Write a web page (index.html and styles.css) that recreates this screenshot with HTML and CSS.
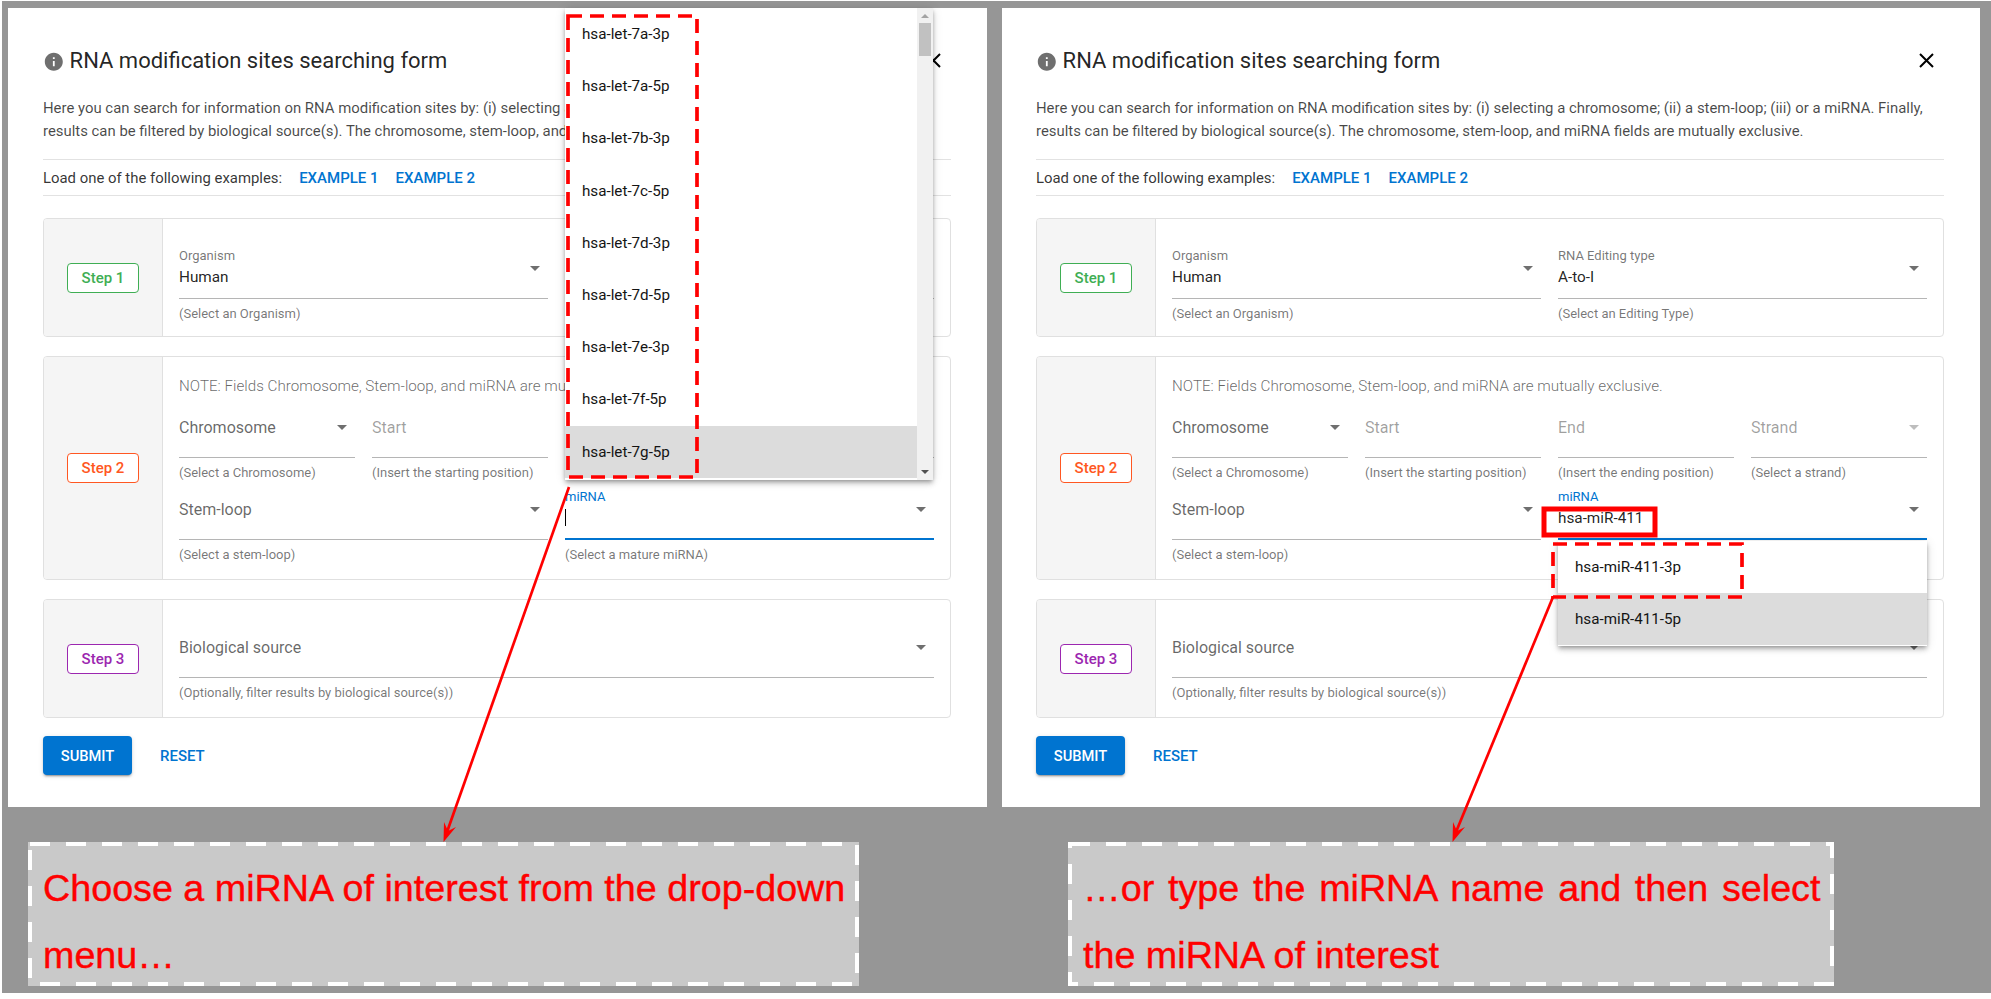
FILE: index.html
```html
<!DOCTYPE html>
<html lang="en">
<head>
<meta charset="utf-8">
<title>RNA modification sites searching form</title>
<link rel="stylesheet" href="styles.css">
</head>
<body>
<div class="stage">
  <section class="col">
    <div class="panel">
      <div class="title-row">
        <svg class="info" viewBox="0 0 24 24"><path d="M12 2C6.48 2 2 6.48 2 12s4.48 10 10 10 10-4.48 10-10S17.52 2 12 2zm1 15h-2v-6h2v6zm0-8h-2V7h2v2z"/></svg>
        <h2 class="title">RNA modification sites searching form</h2>
        <svg class="close" viewBox="0 0 15 15"><path d="M1 1l13 13M14 1L1 14"/></svg>
      </div>
      <p class="intro">Here you can search for information on RNA modification sites by: (i) selecting a chromosome; (ii) a stem-loop; (iii) or a miRNA. Finally, results can be filtered by biological source(s). The chromosome, stem-loop, and miRNA fields are mutually exclusive.</p>
      <div class="examples"><span>Load one of the following examples:</span><a class="link">EXAMPLE 1</a><a class="link">EXAMPLE 2</a></div>

      <div class="card card-1">
        <div class="step"><span class="badge green">Step 1</span></div>
        <div class="fields">
          <div class="field wide"><div class="control"><div class="label">Organism</div><div class="value">Human</div><i class="caret"></i></div><div class="help">(Select an Organism)</div></div>
          <div class="field wide"><div class="control"><div class="label">RNA Editing type</div><div class="value">A-to-I</div><i class="caret"></i></div><div class="help">(Select an Editing Type)</div></div>
        </div>
      </div>

      <div class="card card-2">
        <div class="step"><span class="badge orange">Step 2</span></div>
        <div class="body">
          <p class="note">NOTE: Fields Chromosome, Stem-loop, and miRNA are mutually exclusive.</p>
          <div class="fields">
            <div class="field"><div class="control"><div class="ph">Chromosome</div><i class="caret"></i></div><div class="help">(Select a Chromosome)</div></div>
            <div class="field"><div class="control"><div class="ph dim">Start</div></div><div class="help">(Insert the starting position)</div></div>
            <div class="field"><div class="control"><div class="ph dim">End</div></div><div class="help">(Insert the ending position)</div></div>
            <div class="field"><div class="control"><div class="ph dim">Strand</div><i class="caret faint"></i></div><div class="help">(Select a strand)</div></div>
            <div class="field wide"><div class="control"><div class="ph">Stem-loop</div><i class="caret"></i></div><div class="help">(Select a stem-loop)</div></div>
            <div class="field wide"><div class="control focus"><div class="label blue">miRNA</div><div class="value"><span class="cursor"></span></div><i class="caret"></i></div><div class="help">(Select a mature miRNA)</div></div>
          </div>
        </div>
      </div>

      <div class="card card-3">
        <div class="step"><span class="badge purple">Step 3</span></div>
        <div class="fields">
          <div class="field full"><div class="control"><div class="ph">Biological source</div><i class="caret"></i></div><div class="help">(Optionally, filter results by biological source(s))</div></div>
        </div>
      </div>

      <div class="actions"><button class="submit">SUBMIT</button><a class="link reset">RESET</a></div>

      <div class="menu menu-long">
        <ul class="items">
          <li>hsa-let-7a-3p</li><li>hsa-let-7a-5p</li><li>hsa-let-7b-3p</li><li>hsa-let-7c-5p</li><li>hsa-let-7d-3p</li><li>hsa-let-7d-5p</li><li>hsa-let-7e-3p</li><li>hsa-let-7f-5p</li><li class="hl">hsa-let-7g-5p</li>
        </ul>
        <div class="scrollbar"><i class="sb-up"></i><i class="sb-thumb"></i><i class="sb-down"></i></div>
      </div>
    </div>
    <div class="caption caption-a">
      <svg class="dash" width="831" height="144"><rect x="2" y="2" width="827" height="140"/></svg>
      <p class="line">Choose a miRNA of interest from the drop-down</p>
      <p class="line">menu…</p>
    </div>
  </section>

  <section class="col col-b">
    <div class="panel panel-b">
      <div class="title-row">
        <svg class="info" viewBox="0 0 24 24"><path d="M12 2C6.48 2 2 6.48 2 12s4.48 10 10 10 10-4.48 10-10S17.52 2 12 2zm1 15h-2v-6h2v6zm0-8h-2V7h2v2z"/></svg>
        <h2 class="title">RNA modification sites searching form</h2>
        <svg class="close" viewBox="0 0 15 15"><path d="M1 1l13 13M14 1L1 14"/></svg>
      </div>
      <p class="intro">Here you can search for information on RNA modification sites by: (i) selecting a chromosome; (ii) a stem-loop; (iii) or a miRNA. Finally, results can be filtered by biological source(s). The chromosome, stem-loop, and miRNA fields are mutually exclusive.</p>
      <div class="examples"><span>Load one of the following examples:</span><a class="link">EXAMPLE 1</a><a class="link">EXAMPLE 2</a></div>

      <div class="card card-1">
        <div class="step"><span class="badge green">Step 1</span></div>
        <div class="fields">
          <div class="field wide"><div class="control"><div class="label">Organism</div><div class="value">Human</div><i class="caret"></i></div><div class="help">(Select an Organism)</div></div>
          <div class="field wide"><div class="control"><div class="label">RNA Editing type</div><div class="value">A-to-I</div><i class="caret"></i></div><div class="help">(Select an Editing Type)</div></div>
        </div>
      </div>

      <div class="card card-2">
        <div class="step"><span class="badge orange">Step 2</span></div>
        <div class="body">
          <p class="note">NOTE: Fields Chromosome, Stem-loop, and miRNA are mutually exclusive.</p>
          <div class="fields">
            <div class="field"><div class="control"><div class="ph">Chromosome</div><i class="caret"></i></div><div class="help">(Select a Chromosome)</div></div>
            <div class="field"><div class="control"><div class="ph dim">Start</div></div><div class="help">(Insert the starting position)</div></div>
            <div class="field"><div class="control"><div class="ph dim">End</div></div><div class="help">(Insert the ending position)</div></div>
            <div class="field"><div class="control"><div class="ph dim">Strand</div><i class="caret faint"></i></div><div class="help">(Select a strand)</div></div>
            <div class="field wide"><div class="control"><div class="ph">Stem-loop</div><i class="caret"></i></div><div class="help">(Select a stem-loop)</div></div>
            <div class="field wide"><div class="control focus"><div class="label blue">miRNA</div><div class="value">hsa-miR-411</div><i class="caret"></i></div><div class="help">(Select a mature miRNA)</div></div>
          </div>
        </div>
      </div>

      <div class="card card-3">
        <div class="step"><span class="badge purple">Step 3</span></div>
        <div class="fields">
          <div class="field full"><div class="control"><div class="ph">Biological source</div><i class="caret"></i></div><div class="help">(Optionally, filter results by biological source(s))</div></div>
        </div>
      </div>

      <div class="actions"><button class="submit">SUBMIT</button><a class="link reset">RESET</a></div>

      <div class="menu menu-short">
        <ul class="items">
          <li>hsa-miR-411-3p</li><li class="hl">hsa-miR-411-5p</li>
        </ul>
      </div>
    </div>
    <div class="caption caption-b">
      <svg class="dash" width="766" height="144"><rect x="2" y="2" width="762" height="140"/></svg>
      <p class="line spread">…or type the miRNA name and then select</p>
      <p class="line">the miRNA of interest</p>
    </div>
  </section>
</div>

<svg class="notes" width="1991" height="999" viewBox="0 0 1991 999">
  <rect class="red-dash" x="568" y="16" width="129" height="461"/>
  <rect class="red-dash" x="1553" y="544" width="189" height="53"/>
  <rect class="red-box" x="1544" y="509" width="111" height="26"/>
  <path class="red-line" d="M569 487L447 832"/>
  <path class="red-head" d="M443.500 842L444 822L448 831L456 827Z"/>
  <path class="red-line" d="M1553 597L1456 832"/>
  <path class="red-head" d="M1452.500 842L1453 822L1457 831L1465 827Z"/>
</svg>
</body>
</html>
```
FILE: styles.css
```css
* { box-sizing: border-box; }
html, body { margin: 0; padding: 0; background: #fff; }
body { position: relative; width: 1991px; height: 999px; overflow: hidden; font-family: Roboto, "Liberation Sans", sans-serif; }
p, h2, ul { margin: 0; padding: 0; }
ul { list-style: none; }

.stage { display: flex; gap: 15px; margin: 1px 0 0 2px; height: 992px; padding: 7px 0 0 6px; background: #969696; }
.col { flex: none; width: 979px; }
.col-b { width: 978px; }

.panel { position: relative; height: 799px; padding: 38px 36px 0 35px; background: #fff; }
.panel-b { padding-left: 34px; }

.title-row { display: flex; align-items: center; height: 30px; color: rgba(0,0,0,.87); }
.info { width: 21.6px; height: 21.6px; margin: 2px 5px 0 0; fill: #6f6f6f; flex: none; }
.title { flex: 1; font-size: 22px; font-weight: 400; line-height: 30px; }
.close { width: 15px; height: 15px; margin: -2px 10px 0 0; fill: none; stroke: #000; stroke-width: 2; }

.intro { margin-top: 21px; font-size: 14.9px; line-height: 23px; font-weight: 400; color: rgba(0,0,0,.72); }
.examples { display: flex; align-items: center; gap: 17px; height: 37px; margin-top: 16px; border-top: 1px solid #e2e2e2; border-bottom: 1px solid #e2e2e2; font-size: 14.9px; color: rgba(0,0,0,.8); }
.link { color: #0074d0; font-size: 15px; font-weight: 500; }

.card { display: flex; border: 1px solid #e0e0e0; border-radius: 4px; margin-top: 19px; }
.card-1 { margin-top: 22px; height: 119px; }
.card-2 { height: 224px; }
.card-3 { height: 119px; }
.step { flex: none; width: 119px; display: flex; align-items: center; justify-content: center; background: #f5f5f5; border-right: 1px solid #e0e0e0; border-radius: 3px 0 0 3px; }
.badge { width: 72px; height: 30px; border: 1px solid; border-radius: 4px; background: #fff; display: flex; align-items: center; justify-content: center; font-size: 15px; font-weight: 500; }
.green { color: #3fae54; border-color: #3fae54; }
.orange { color: #ff5722; border-color: #ff5722; }
.purple { color: #9c27b0; border-color: #9c27b0; }

.fields { flex: 1; display: grid; grid-template-columns: repeat(4, minmax(0, 1fr)); column-gap: 17px; row-gap: 10px; align-content: start; }
.card-1 > .fields { padding: 30px 16px 0; }
.card-3 > .fields { padding: 28px 16px 0; }
.body { flex: 1; padding: 19px 16px 0; min-width: 0; }
.note { font-size: 15.2px; line-height: 20px; font-weight: 300; color: rgba(0,0,0,.6); margin-bottom: 12px; }
.wide { grid-column: span 2; }
.full { grid-column: 1 / -1; }

.control { position: relative; height: 50px; border-bottom: 1px solid #b5b5b5; }
.control.focus { border-bottom: 2px solid #0074d0; height: 50px; }
.label { font-size: 13px; line-height: 14px; color: rgba(0,0,0,.55); }
.label.blue { color: #0074d0; }
.value { margin-top: 4px; height: 20px; font-size: 15.3px; line-height: 20px; color: rgba(0,0,0,.87); }
.ph { padding-top: 10px; font-size: 16px; line-height: 20px; color: rgba(0,0,0,.6); }
.ph.dim { color: rgba(0,0,0,.38); }
.caret { position: absolute; top: 17px; right: 8px; width: 0; height: 0; border-left: 5px solid transparent; border-right: 5px solid transparent; border-top: 5px solid #6f6f6f; }
.caret.faint { border-top-color: #bdbdbd; }
.cursor { display: inline-block; width: 1px; height: 17px; background: #000; vertical-align: top; margin-top: 1px; }
.help { margin-top: 8px; font-size: 13px; line-height: 14px; color: rgba(0,0,0,.54); }

.actions { display: flex; align-items: center; gap: 28px; margin-top: 18px; }
.submit { width: 89px; height: 39px; border: 0; border-radius: 4px; background: #0074d0; color: #fff; font: 500 14.7px Roboto, sans-serif; box-shadow: 0 3px 1px -2px rgba(0,0,0,.2), 0 2px 2px 0 rgba(0,0,0,.14), 0 1px 5px 0 rgba(0,0,0,.12); }

.menu { position: absolute; display: flex; background: #fff; box-shadow: 0 2px 4px -1px rgba(0,0,0,.3), 0 4px 5px rgba(0,0,0,.14), 0 1px 10px rgba(0,0,0,.12); color: #141414; }
.menu-long { left: 557px; top: 0; width: 368px; height: 472px; }
.menu-short { left: 556px; top: 533px; width: 369px; height: 105px; }
.items { flex: 1; }
.items li { display: flex; align-items: center; height: 52.2px; padding-left: 17px; font-size: 15.2px; }
.items li.hl { background: #dcdcdc; }
.scrollbar { position: relative; flex: none; width: 16px; background: #f1f1f1; }
.sb-up, .sb-down { position: absolute; left: 4px; width: 0; height: 0; border-left: 4px solid transparent; border-right: 4px solid transparent; }
.sb-up { top: 6px; border-bottom: 4px solid #a3a3a3; }
.sb-down { bottom: 6px; border-top: 4px solid #505050; }
.sb-thumb { position: absolute; left: 2px; right: 2px; top: 15px; height: 33px; background: #c1c1c1; }

.caption { position: relative; height: 144px; margin-top: 35px; padding: 13px 0 0 15px; background: #c9c9c9; color: #f00; font-family: "Liberation Sans", Arial, sans-serif; font-size: 37.7px; -webkit-text-stroke: 0.4px #f00; }
.caption-a { width: 831px; margin-left: 20px; }
.caption-b { width: 766px; margin-left: 66px; }
.line { line-height: 67px; white-space: nowrap; }
.spread { word-spacing: 3.3px; }
.dash { position: absolute; left: 0; top: 0; }
.dash rect { fill: none; stroke: #fff; stroke-width: 4; stroke-dasharray: 20 16; }

.notes { position: absolute; left: 0; top: 0; pointer-events: none; }
.red-dash { fill: none; stroke: #f00; stroke-width: 3.700; stroke-dasharray: 14 8; }
.red-box { fill: none; stroke: #f00; stroke-width: 5; }
.red-line { fill: none; stroke: #f00; stroke-width: 2.700; }
.red-head { fill: #f00; }
```
